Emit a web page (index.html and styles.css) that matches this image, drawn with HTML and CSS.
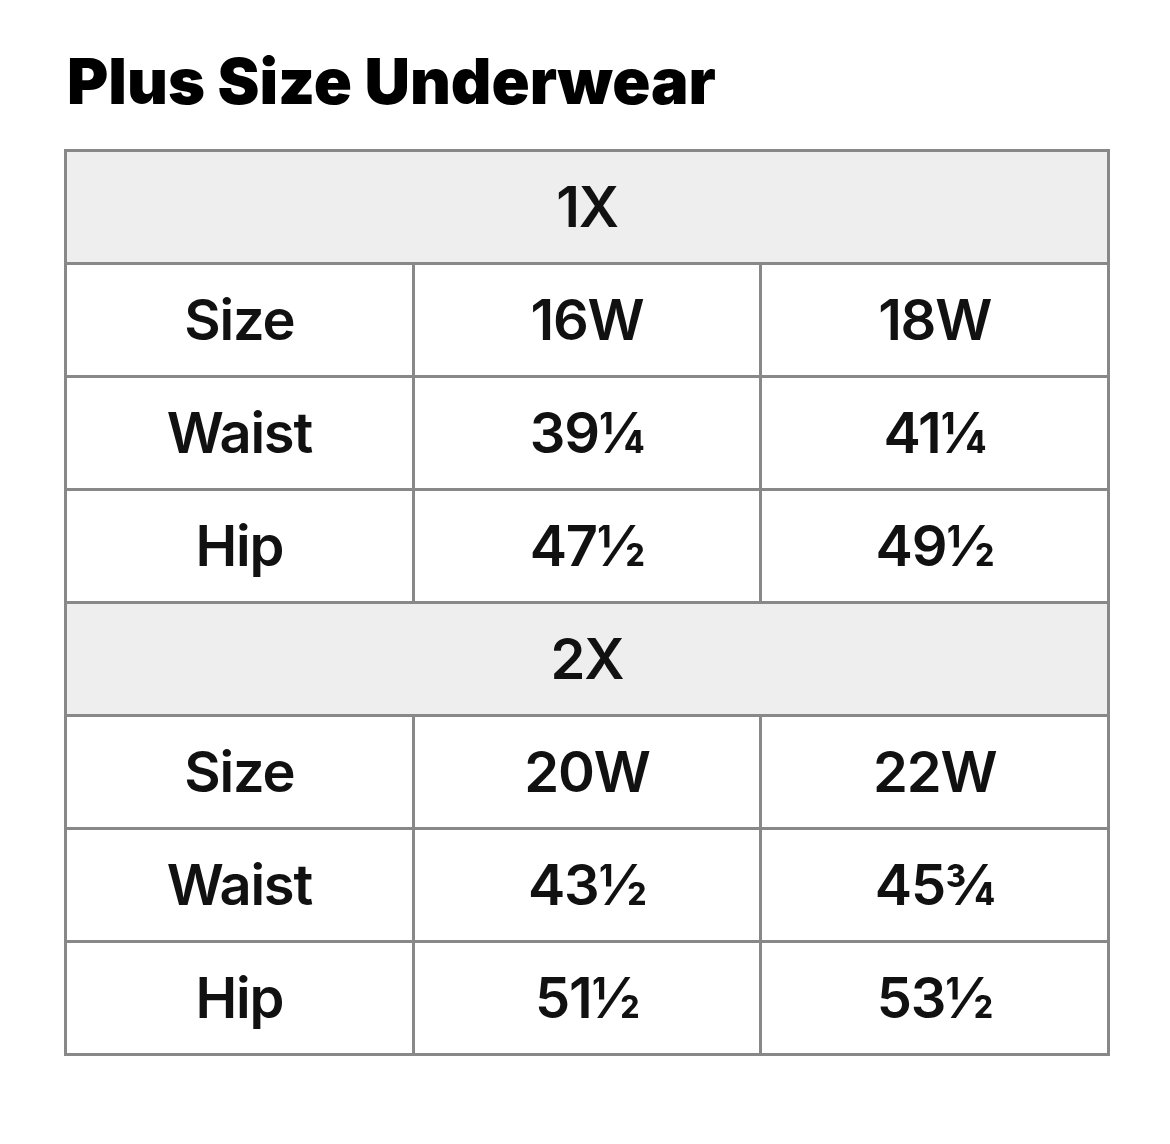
FILE: index.html
```html
<!DOCTYPE html>
<html>
<head>
<meta charset="utf-8">
<link rel="stylesheet" href="styles.css">
</head>
<body>
<div class="page">
  <h1 class="title">Plus Size Underwear</h1>
  <table class="chart">
    <tr class="group"><td colspan="3">1X</td></tr>
    <tr><td>Size</td><td>16W</td><td>18W</td></tr>
    <tr><td>Waist</td><td>39¼</td><td>41¼</td></tr>
    <tr><td>Hip</td><td>47½</td><td>49½</td></tr>
    <tr class="group"><td colspan="3">2X</td></tr>
    <tr><td>Size</td><td>20W</td><td>22W</td></tr>
    <tr><td>Waist</td><td>43½</td><td>45¾</td></tr>
    <tr><td>Hip</td><td>51½</td><td>53½</td></tr>
  </table>
</div>
</body>
</html>
```
FILE: styles.css
```css
html, body {
  margin: 0;
  padding: 0;
  background: #ffffff;
}
.page {
  padding: 50px 0 0 64px;
  font-family: Inter, "Liberation Sans", sans-serif;
  color: #111111;
}
.title {
  margin: 0 0 37px 3px;
  font-size: 63px;
  line-height: 62px;
  font-weight: 900;
  letter-spacing: 0;
  color: #000000;
}
.chart {
  width: 1046px;
  border-collapse: collapse;
  table-layout: fixed;
  border: 3px solid #888888;
}
.chart td {
  border: 3px solid #888888;
  height: 110px;
  padding: 0;
  text-align: center;
  vertical-align: middle;
  font-size: 56px;
  font-weight: 600;
  letter-spacing: -1.2px;
  color: #111111;
}
.chart .group td {
  background: #eeeeee;
}
```
